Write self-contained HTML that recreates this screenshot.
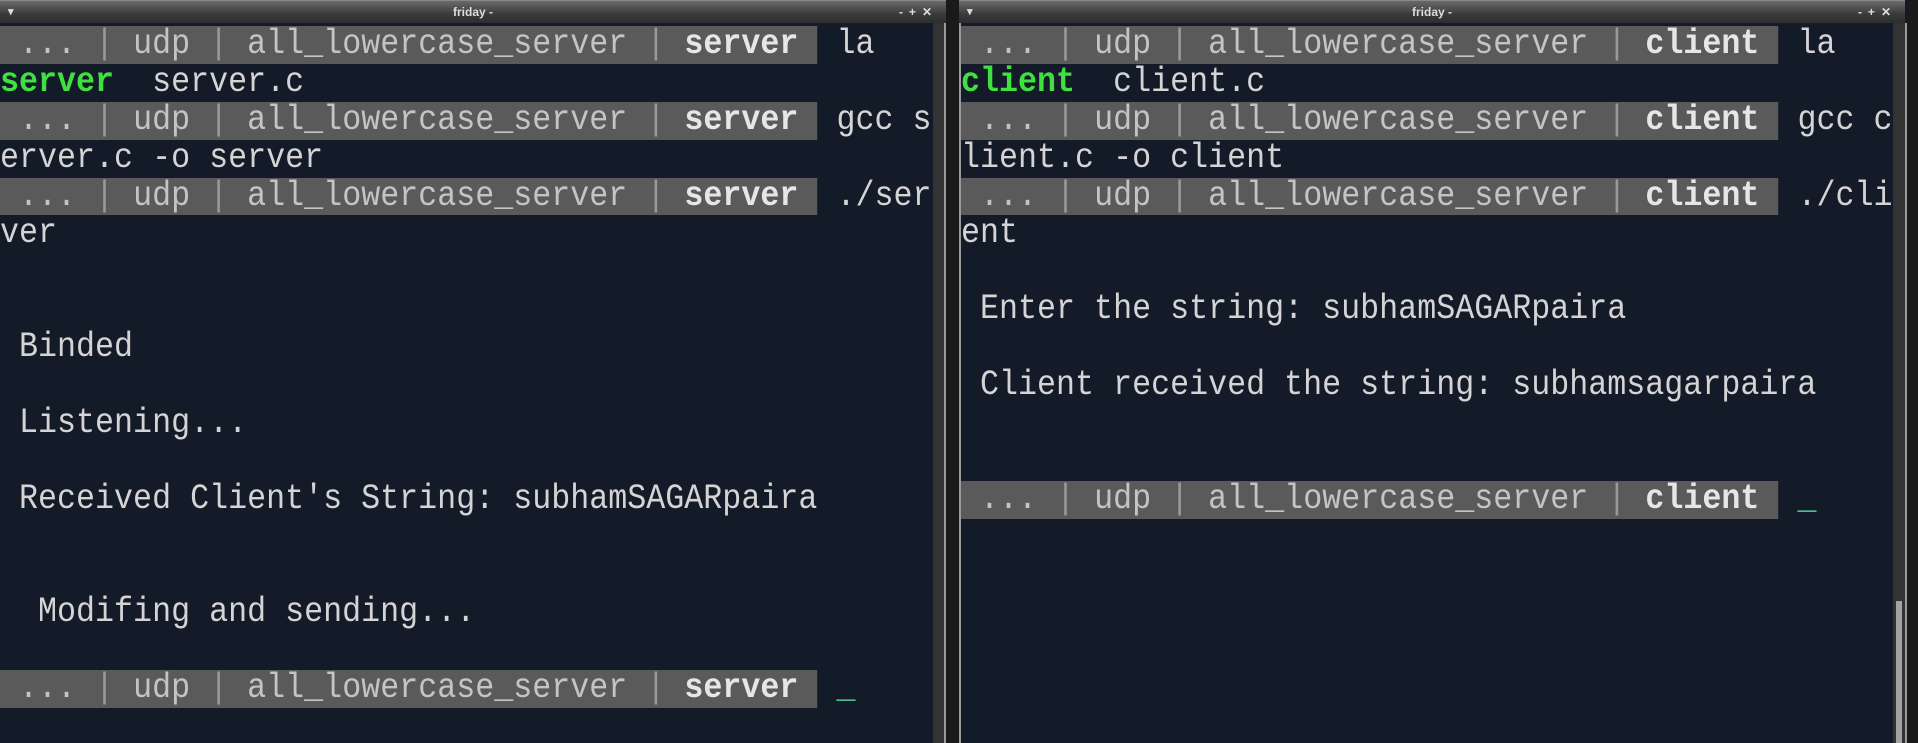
<!DOCTYPE html>
<html><head><meta charset="utf-8"><style>
*{margin:0;padding:0;box-sizing:border-box}
body{width:1918px;height:743px;background:#1a1a1a;position:relative;overflow:hidden}
.win{position:absolute;top:0;height:743px;background:#131a28;overflow:hidden}
.tb{position:absolute;left:0;right:0;top:0;height:23px;background:linear-gradient(#6a6a6a,#3a3a3a 60%,#2e2e2e);color:#ddd;font:bold 12px "Liberation Sans",sans-serif;text-align:center;line-height:23px;border-top:1px solid #888;z-index:2}
.tb .l{position:absolute;left:8px;top:0;font-size:11px}
.tb .r{position:absolute;right:8px;top:0;letter-spacing:6px}
.term{position:absolute;left:0;top:26px;font-family:"Liberation Mono",monospace;font-size:35px;color:#d4d4d4;transform:scaleX(0.905);transform-origin:0 0}
.ln{height:37.9px;line-height:37.9px;white-space:pre;overflow:hidden}
.bar{background:#5a5a5a;color:#c4c4c4;display:inline-block;height:37.9px;vertical-align:top}
.sep{color:#9a9a9a}
.b{font-weight:bold;color:#e6e6e6}
.g{color:#3fe03f;font-weight:bold}
.cur{color:#4fc08d}
.sb{position:absolute;top:23px;bottom:0;width:12px;background:#333}
.edge{position:absolute;top:23px;bottom:0;width:2px;background:#9a9a9a}
</style></head><body>
<div class="win" style="left:0;width:946px">
<div class="tb"><span class="l">▾</span>friday -<span class="r">-+✕</span></div>
<div class="term" style="width:1031px">
<div class="ln"><span class="bar"> ... <span class="sep">|</span> udp <span class="sep">|</span> all_lowercase_server <span class="sep">|</span> <span class="b">server</span> </span> la</div>
<div class="ln"><span class="g">server</span>  server.c</div>
<div class="ln"><span class="bar"> ... <span class="sep">|</span> udp <span class="sep">|</span> all_lowercase_server <span class="sep">|</span> <span class="b">server</span> </span> gcc s</div>
<div class="ln">erver.c -o server</div>
<div class="ln"><span class="bar"> ... <span class="sep">|</span> udp <span class="sep">|</span> all_lowercase_server <span class="sep">|</span> <span class="b">server</span> </span> ./ser</div>
<div class="ln">ver</div>
<div class="ln"> </div>
<div class="ln"> </div>
<div class="ln"> Binded</div>
<div class="ln"> </div>
<div class="ln"> Listening...</div>
<div class="ln"> </div>
<div class="ln"> Received Client's String: subhamSAGARpaira</div>
<div class="ln"> </div>
<div class="ln"> </div>
<div class="ln">  Modifing and sending...</div>
<div class="ln"> </div>
<div class="ln"><span class="bar"> ... <span class="sep">|</span> udp <span class="sep">|</span> all_lowercase_server <span class="sep">|</span> <span class="b">server</span> </span> <span class="cur">_</span></div>
</div>
<div class="sb" style="left:933px"></div>
<div class="edge" style="left:944px"></div>
</div>
<div class="win" style="left:959px;width:959px;background:#131a28">
<div class="tb" style="right:13px"><span class="l">▾</span>friday -<span class="r">-+✕</span></div>
<div class="term" style="left:2px;width:1030px">
<div class="ln"><span class="bar"> ... <span class="sep">|</span> udp <span class="sep">|</span> all_lowercase_server <span class="sep">|</span> <span class="b">client</span> </span> la</div>
<div class="ln"><span class="g">client</span>  client.c</div>
<div class="ln"><span class="bar"> ... <span class="sep">|</span> udp <span class="sep">|</span> all_lowercase_server <span class="sep">|</span> <span class="b">client</span> </span> gcc c</div>
<div class="ln">lient.c -o client</div>
<div class="ln"><span class="bar"> ... <span class="sep">|</span> udp <span class="sep">|</span> all_lowercase_server <span class="sep">|</span> <span class="b">client</span> </span> ./cli</div>
<div class="ln">ent</div>
<div class="ln"> </div>
<div class="ln"> Enter the string: subhamSAGARpaira</div>
<div class="ln"> </div>
<div class="ln"> Client received the string: subhamsagarpaira</div>
<div class="ln"> </div>
<div class="ln"> </div>
<div class="ln"><span class="bar"> ... <span class="sep">|</span> udp <span class="sep">|</span> all_lowercase_server <span class="sep">|</span> <span class="b">client</span> </span> <span class="cur">_</span></div>
</div>
<div class="edge" style="left:0;z-index:1"></div>
<div class="sb" style="left:934px"></div>
<div style="position:absolute;left:937px;top:601px;width:6px;height:142px;background:#a3a3a3"></div>
<div class="edge" style="left:946px"></div>
<div style="position:absolute;left:948px;top:0;width:11px;height:743px;background:#1a1a1a"></div>
</div>
</body></html>
